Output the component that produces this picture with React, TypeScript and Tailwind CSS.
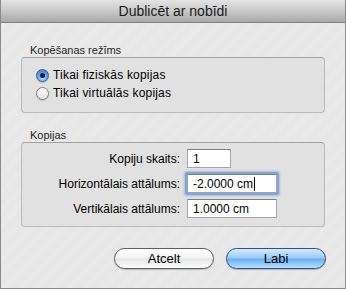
import React from "react";

const font = { fontFamily: '"Liberation Sans", Arial, sans-serif' };

function Radio({ checked, label }: { checked: boolean; label: string }) {
  return (
    <div className="flex items-center h-[18px] gap-[4px]">
      {checked ? (
        <div className="w-[13px] h-[13px] rounded-full border border-[#3b5f96] bg-[radial-gradient(circle_at_50%_80%,#a9d3ff_0%,#5f9be3_55%,#3f76c7_100%)] flex items-center justify-center shadow-[0_1px_1px_rgba(0,0,0,0.2)]">
          <div className="w-[5px] h-[5px] rounded-full bg-[#17243d]" />
        </div>
      ) : (
        <div className="w-[13px] h-[13px] rounded-full border border-[#7d7d7d] bg-[linear-gradient(#ffffff,#f0f0f0_50%,#e2e2e2)] shadow-[0_1px_1px_rgba(0,0,0,0.15)]" />
      )}
      <span className="text-[12px] text-black tracking-[0.2px]">{label}</span>
    </div>
  );
}

function Field({
  value,
  width,
  focused,
}: {
  value: string;
  width: string;
  focused?: boolean;
}) {
  return (
    <div
      className={
        "h-[19px] bg-white border border-[#a5a5a5] border-t-[#7e7e7e] flex items-center pl-[5px] text-[12px] text-black " +
        width +
        (focused ? " shadow-[0_0_0_2px_#7fa6dc,0_0_2px_3px_rgba(90,140,210,0.45)] rounded-[1px]" : "")
      }
    >
      <span>{value}</span>
      {focused && <span className="inline-block w-[1px] h-[14px] bg-black ml-[1px]" />}
    </div>
  );
}

export default function App() {
  return (
    <div
      className="w-[346px] h-[289px] flex flex-col border-l border-r border-b border-[#8a8a8a] bg-[#e9e9e9] overflow-hidden"
      style={font}
    >
      <div className="h-[23px] shrink-0 flex items-center justify-center border-b border-[#808080] bg-[linear-gradient(#e4e4e4,#c8c8c8_50%,#a8a8a8)] text-[14px] text-[#1a1a1a]">
        Dublicēt ar nobīdi
      </div>
      <div className="flex-1 flex flex-col px-[20px] pt-[21px] bg-[repeating-linear-gradient(135deg,#ebebeb_0px,#ebebeb_1px,#e5e5e5_1px,#e5e5e5_2px)]">
        <div className="text-[11px] leading-[13px] pl-[9px] text-[#262626]">
          Kopēšanas režīms
        </div>
        <div className="h-[56px] rounded-[4px] border border-[#bababa] border-t-[#a2a2a2] bg-[#e1e1e1] pt-[8px] pl-[14px]">
          <Radio checked label="Tikai fiziskās kopijas" />
          <Radio checked={false} label="Tikai virtuālās kopijas" />
        </div>
        <div className="mt-[16px] text-[11px] leading-[13px] pl-[9px] text-[#262626]">
          Kopijas
        </div>
        <div className="h-[85px] rounded-[4px] border border-[#bababa] border-t-[#a2a2a2] bg-[#e1e1e1] pt-[6px] grid grid-cols-[158px_auto] gap-x-[7px] gap-y-[6px] content-start">
          <div className="h-[19px] flex items-center justify-end text-[12px] text-black">
            Kopiju skaits:
          </div>
          <Field value="1" width="w-[44px]" />
          <div className="h-[19px] flex items-center justify-end text-[12px] text-black">
            Horizontālais attālums:
          </div>
          <Field value="-2.0000 cm" width="w-[90px]" focused />
          <div className="h-[19px] flex items-center justify-end text-[12px] text-black">
            Vertikālais attālums:
          </div>
          <Field value="1.0000 cm" width="w-[90px]" />
        </div>
        <div className="mt-[21px] flex justify-end gap-[12px] mr-[-1px]">
          <div className="w-[100px] h-[21px] rounded-full border border-[#5e5e5e] bg-[linear-gradient(#ffffff,#f4f4f4_45%,#e6e6e6_55%,#fdfdfd)] shadow-[0_1px_1px_rgba(0,0,0,0.2)] flex items-center justify-center text-[13px] text-black">
            Atcelt
          </div>
          <div className="w-[100px] h-[21px] rounded-full border border-[#2f4f86] bg-[linear-gradient(#d3ebff,#9ccbf7_45%,#6cb0f0_55%,#b6e2ff)] shadow-[0_1px_1px_rgba(0,0,0,0.25)] flex items-center justify-center text-[13px] text-black">
            Labi
          </div>
        </div>
      </div>
    </div>
  );
}
